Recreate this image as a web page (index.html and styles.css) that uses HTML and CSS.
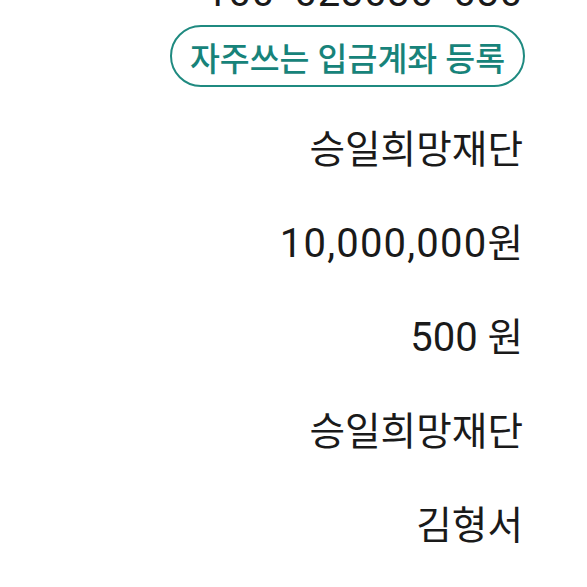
FILE: index.html
```html
<!DOCTYPE html>
<html lang="ko">
<head>
<meta charset="utf-8">
<link rel="stylesheet" href="styles.css">
</head>
<body>
<div class="detail">
  <div class="account">100<span class="dash">-</span>023030<span class="dash">-</span>030</div>
  <button class="register">자주쓰는 입금계좌 등록</button>
  <div class="row">승일희망재단</div>
  <div class="row"><span class="num wide">10,000,000</span>원</div>
  <div class="row"><span class="num">500</span> 원</div>
  <div class="row">승일희망재단</div>
  <div class="row">김형서</div>
</div>
</body>
</html>
```
FILE: styles.css
```css
html, body {
  margin: 0;
  padding: 0;
  background: #ffffff;
}
body {
  width: 587px;
  height: 587px;
  overflow: hidden;
  font-family: Roboto, "Noto Sans CJK KR", sans-serif;
  color: #1a1a1a;
}
.detail {
  display: flex;
  flex-direction: column;
  align-items: flex-end;
  padding-right: 64px;
}
.account {
  font-size: 40px;
  line-height: 36px;
  margin-top: -25px;
  letter-spacing: 0.7px;
  white-space: nowrap;
}
.dash {
  margin: 0 4px;
}
.register {
  margin-top: 14px;
  margin-right: -2px;
  width: 355px;
  height: 62px;
  box-sizing: border-box;
  border: 2px solid #1f8a80;
  border-radius: 31px;
  background: #ffffff;
  color: #17837a;
  font-family: Roboto, "Noto Sans CJK KR", sans-serif;
  font-size: 32.5px;
  font-weight: 500;
  padding: 0;
  display: flex;
  align-items: center;
  justify-content: center;
}
.row {
  font-size: 38.7px;
  line-height: 94px;
  white-space: nowrap;
}
.num {
  font-size: 40px;
}
.num.wide {
  letter-spacing: 1.2px;
}
.register + .row {
  margin-top: 16px;
}
```
